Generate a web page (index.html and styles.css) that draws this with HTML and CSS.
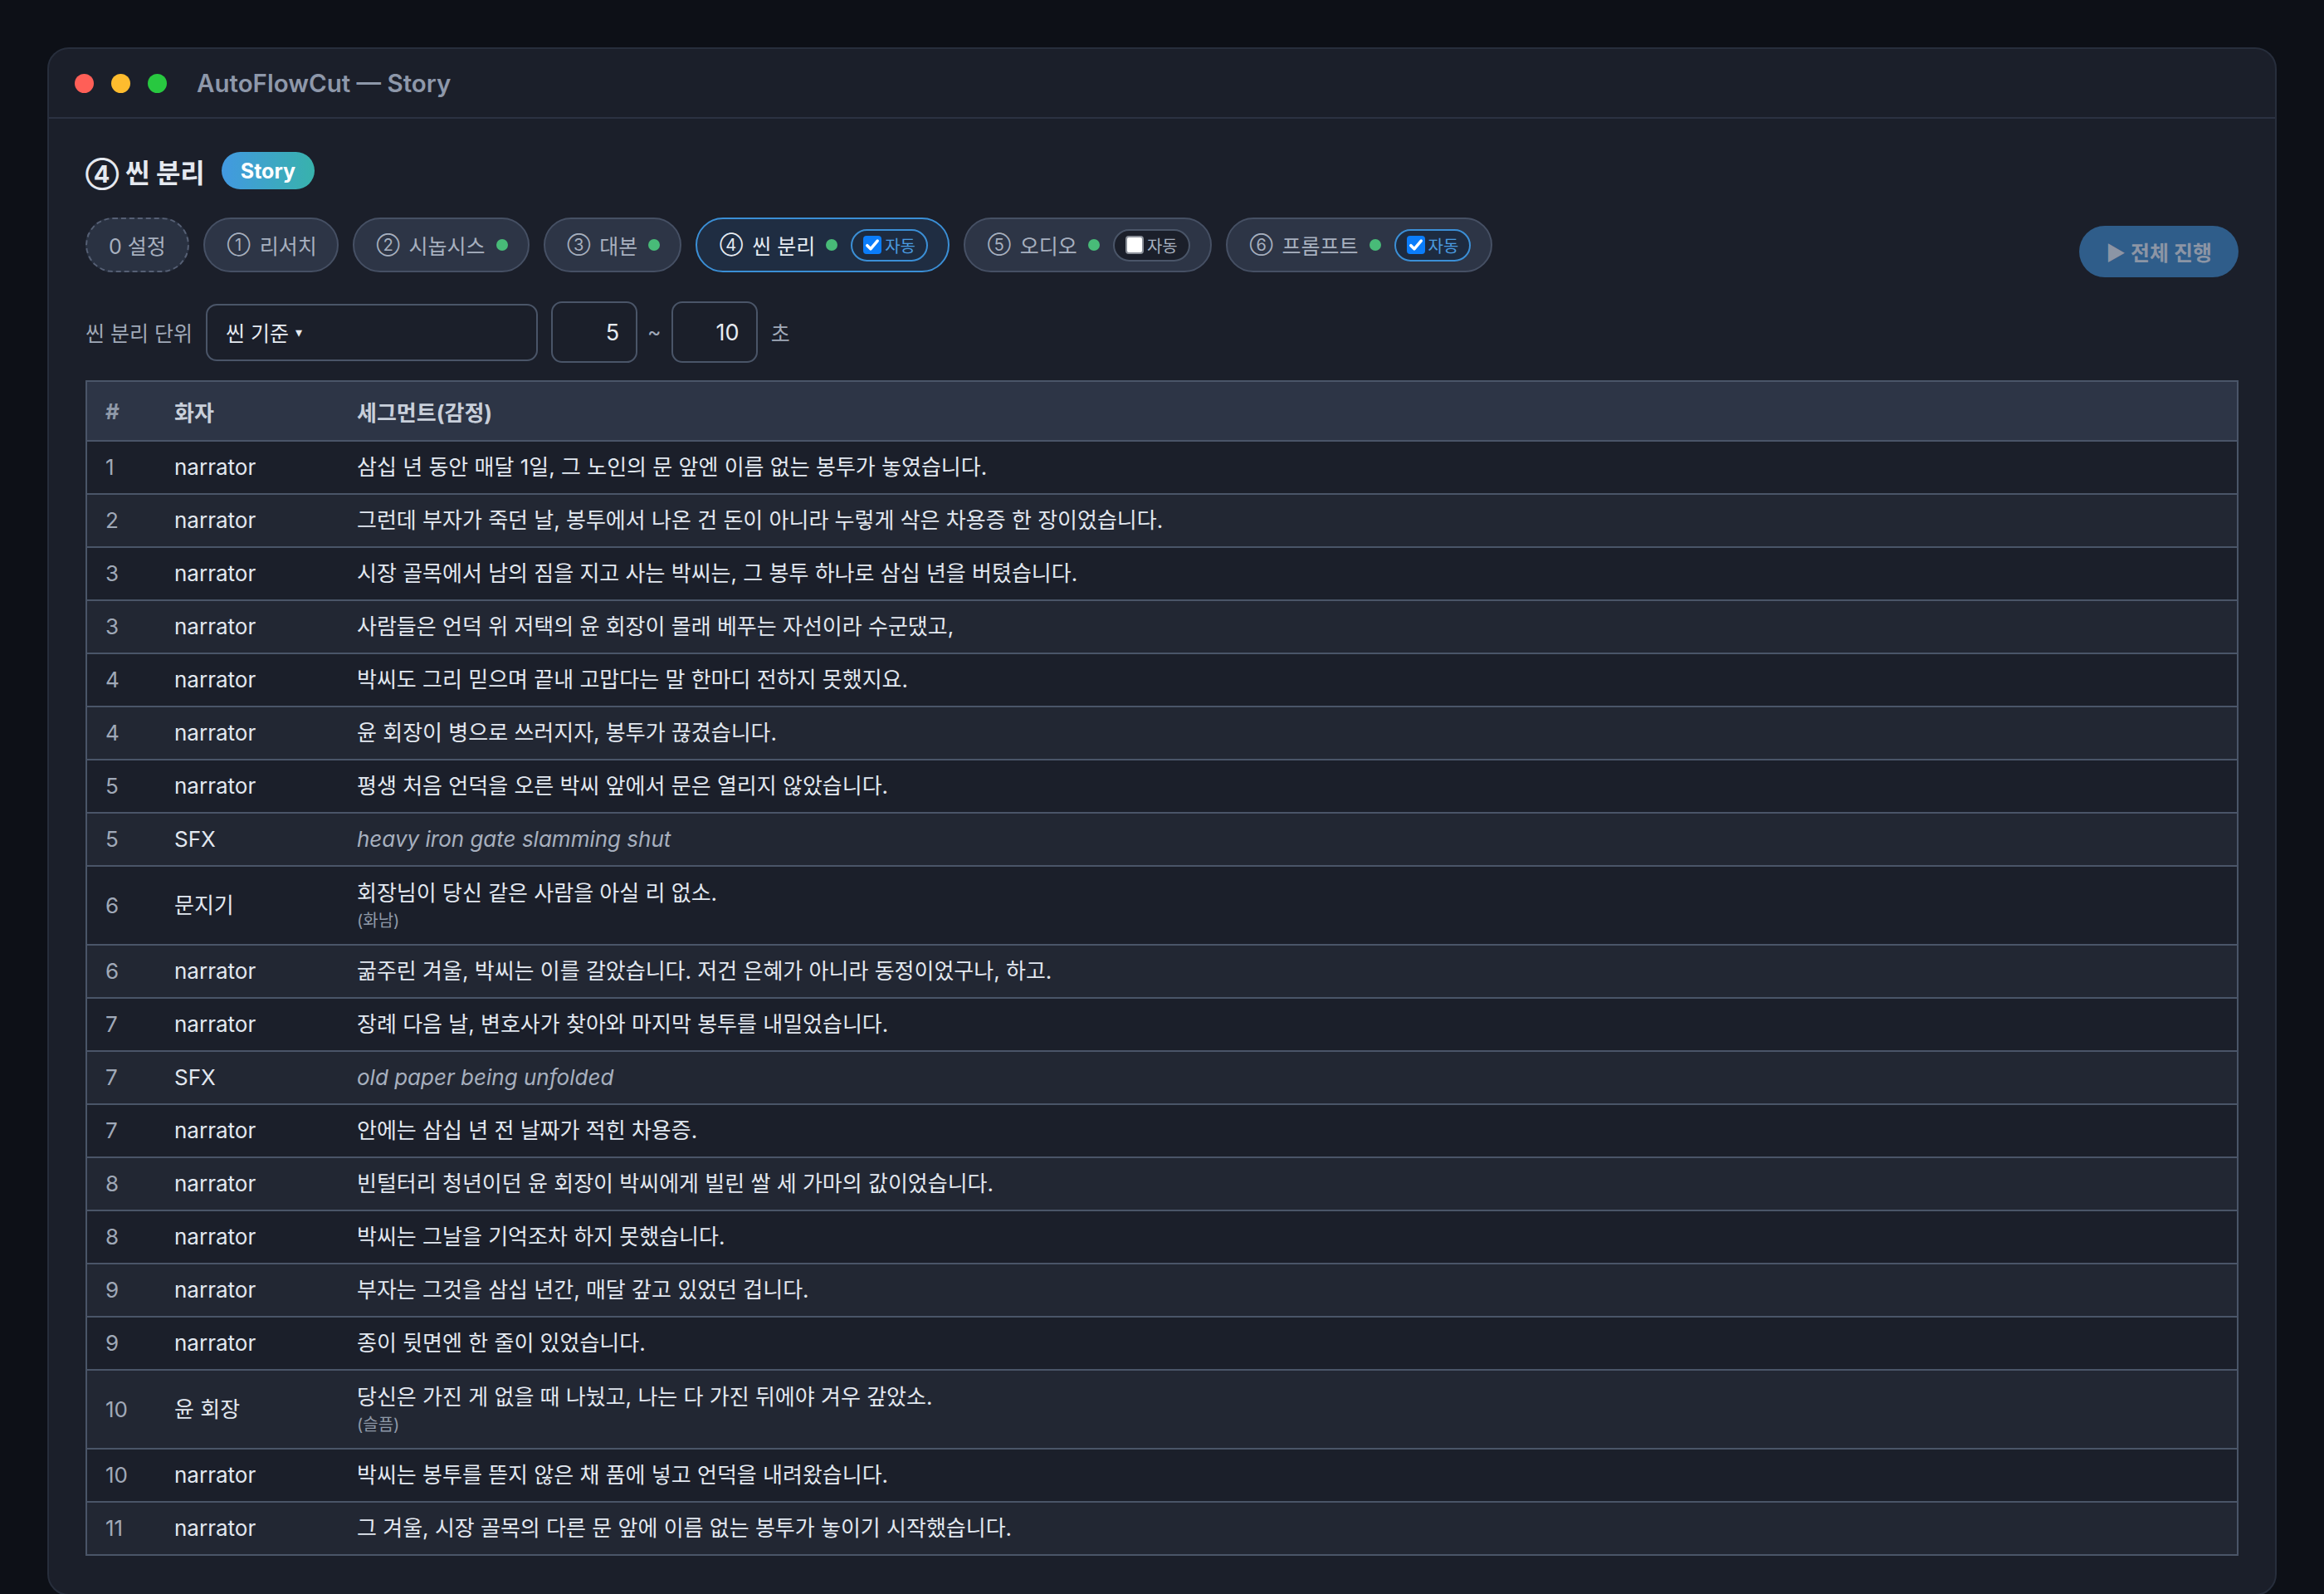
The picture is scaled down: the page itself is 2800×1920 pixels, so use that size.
FILE: index.html
```html
<!DOCTYPE html>
<html lang="ko">
<head>
  <meta charset="UTF-8" />
  <meta name="viewport" content="width=device-width, initial-scale=1.0"/>
  <title>AutoFlowCut — Story</title>
  <link rel="stylesheet" href="styles.css">
</head>
<body>

  <div class="window">
    <!-- Title bar -->
    <div class="titlebar">
      <span class="light red"></span>
      <span class="light yellow"></span>
      <span class="light green"></span>
      <span class="title">AutoFlowCut — Story</span>
    </div>

    <div class="content">
      <!-- Heading -->
      <div class="heading">
        <h2><span class="ic">④</span> 씬 분리</h2>
        <span class="badge">Story</span>
      </div>

      <!-- Step tabs -->
      <div class="toolbar">
        <div class="steps">
          <span class="step dashed">0 설정</span>
          <span class="step"><b class="ic">①</b> 리서치</span>
          <span class="step"><b class="ic">②</b> 시놉시스<i class="dot"></i></span>
          <span class="step"><b class="ic">③</b> 대본<i class="dot"></i></span>
          <span class="step active"><b class="ic">④</b> 씬 분리<i class="dot"></i>
            <span class="auto on"><span class="check on"><svg viewBox="0 0 16 16"><path d="M3.5 8.5l3 3 6-7" /></svg></span>자동</span>
          </span>
          <span class="step"><b class="ic">⑤</b> 오디오<i class="dot"></i>
            <span class="auto"><span class="check"></span>자동</span>
          </span>
          <span class="step"><b class="ic">⑥</b> 프롬프트<i class="dot"></i>
            <span class="auto on"><span class="check on"><svg viewBox="0 0 16 16"><path d="M3.5 8.5l3 3 6-7" /></svg></span>자동</span>
          </span>
        </div>
        <button class="run">▶ 전체 진행</button>
      </div>

      <!-- Split settings -->
      <div class="settings">
        <label>씬 분리 단위</label>
        <div class="select">씬 기준 <span class="caret">▾</span></div>
        <div class="num">5</div>
        <span class="tilde">~</span>
        <div class="num">10</div>
        <span class="unit">초</span>
      </div>

      <!-- Segments -->
      <table class="segments">
        <thead>
          <tr><th class="no">#</th><th class="who">화자</th><th>세그먼트(감정)</th></tr>
        </thead>
        <tbody>
          <tr><td class="no">1</td><td>narrator</td><td>삼십 년 동안 매달 1일, 그 노인의 문 앞엔 이름 없는 봉투가 놓였습니다.</td></tr>
          <tr><td class="no">2</td><td>narrator</td><td>그런데 부자가 죽던 날, 봉투에서 나온 건 돈이 아니라 누렇게 삭은 차용증 한 장이었습니다.</td></tr>
          <tr><td class="no">3</td><td>narrator</td><td>시장 골목에서 남의 짐을 지고 사는 박씨는, 그 봉투 하나로 삼십 년을 버텼습니다.</td></tr>
          <tr><td class="no">3</td><td>narrator</td><td>사람들은 언덕 위 저택의 윤 회장이 몰래 베푸는 자선이라 수군댔고,</td></tr>
          <tr><td class="no">4</td><td>narrator</td><td>박씨도 그리 믿으며 끝내 고맙다는 말 한마디 전하지 못했지요.</td></tr>
          <tr><td class="no">4</td><td>narrator</td><td>윤 회장이 병으로 쓰러지자, 봉투가 끊겼습니다.</td></tr>
          <tr><td class="no">5</td><td>narrator</td><td>평생 처음 언덕을 오른 박씨 앞에서 문은 열리지 않았습니다.</td></tr>
          <tr><td class="no">5</td><td>SFX</td><td class="sfx">heavy iron gate slamming shut</td></tr>
          <tr class="tall"><td class="no">6</td><td>문지기</td><td>회장님이 당신 같은 사람을 아실 리 없소.<div class="emotion">(화남)</div></td></tr>
          <tr><td class="no">6</td><td>narrator</td><td>굶주린 겨울, 박씨는 이를 갈았습니다. 저건 은혜가 아니라 동정이었구나, 하고.</td></tr>
          <tr><td class="no">7</td><td>narrator</td><td>장례 다음 날, 변호사가 찾아와 마지막 봉투를 내밀었습니다.</td></tr>
          <tr><td class="no">7</td><td>SFX</td><td class="sfx">old paper being unfolded</td></tr>
          <tr><td class="no">7</td><td>narrator</td><td>안에는 삼십 년 전 날짜가 적힌 차용증.</td></tr>
          <tr><td class="no">8</td><td>narrator</td><td>빈털터리 청년이던 윤 회장이 박씨에게 빌린 쌀 세 가마의 값이었습니다.</td></tr>
          <tr><td class="no">8</td><td>narrator</td><td>박씨는 그날을 기억조차 하지 못했습니다.</td></tr>
          <tr><td class="no">9</td><td>narrator</td><td>부자는 그것을 삼십 년간, 매달 갚고 있었던 겁니다.</td></tr>
          <tr><td class="no">9</td><td>narrator</td><td>종이 뒷면엔 한 줄이 있었습니다.</td></tr>
          <tr class="tall"><td class="no">10</td><td>윤 회장</td><td>당신은 가진 게 없을 때 나눴고, 나는 다 가진 뒤에야 겨우 갚았소.<div class="emotion">(슬픔)</div></td></tr>
          <tr><td class="no">10</td><td>narrator</td><td>박씨는 봉투를 뜯지 않은 채 품에 넣고 언덕을 내려왔습니다.</td></tr>
          <tr><td class="no">11</td><td>narrator</td><td>그 겨울, 시장 골목의 다른 문 앞에 이름 없는 봉투가 놓이기 시작했습니다.</td></tr>
        </tbody>
      </table>
    </div>
  </div>

</body>
</html>
```

FILE: styles.css
```css
/* Reset and base styling */
* {
  margin: 0;
  padding: 0;
  box-sizing: border-box;
}

body {
  background: #0d1017;
  color: #e2e8f0;
  font-family: 'Inter', 'Noto Sans CJK KR', sans-serif;
  font-size: 26px;
  padding: 57px 57px 0;
}

/* Window frame */
.window {
  background: #1b1f2a;
  border: 2px solid #272e3c;
  border-radius: 26px;
  overflow: hidden;
}

.titlebar {
  height: 84px;
  display: flex;
  align-items: center;
  padding-left: 31px;
  gap: 21px;
  border-bottom: 2px solid #2b3242;
}

.light {
  width: 23px;
  height: 23px;
  border-radius: 50%;
}

.light.red { background: #ff5f57; }
.light.yellow { background: #febc2e; }
.light.green { background: #28c840; }

.title {
  margin-left: 15px;
  font-size: 29.5px;
  font-weight: 600;
  color: #8e98aa;
}

.content {
  padding: 40px 44px 46px;
}

/* Heading */
.heading {
  display: flex;
  align-items: center;
  gap: 20px;
  height: 45px;
}

.heading h2 {
  font-size: 32px;
  font-weight: 700;
  color: #e5e9f0;
}

.heading h2 .ic {
  font-size: 29px;
}

.badge {
  height: 45px;
  padding: 0 23px;
  border-radius: 23px;
  display: flex;
  align-items: center;
  font-size: 25px;
  font-weight: 700;
  color: #fff;
  background: linear-gradient(90deg, #4299e1, #38b2ac);
}

/* Steps */
.toolbar {
  display: flex;
  justify-content: space-between;
  align-items: flex-start;
  margin-top: 34px;
}

.steps {
  display: flex;
  gap: 17px;
}

.step {
  height: 66px;
  padding: 0 24px 0 27px;
  border-radius: 33px;
  display: flex;
  align-items: center;
  white-space: pre;
  font-size: 25px;
  color: #a7b0bf;
  background: #2d3546;
  border: 2px solid #465064;
}

.step .ic {
  margin-right: 4px;
  font-weight: 400;
  font-size: 20px;
}

.step.dashed {
  padding: 0 26px;
  border-style: dashed;
  border-color: #566075;
  background: #2a3242;
}

.step.active {
  background: #1f2d42;
  border-color: #3b8fd6;
  color: #e6ebf2;
}

.dot {
  margin-left: 13px;
  width: 14px;
  height: 14px;
  border-radius: 50%;
  background: #48bb78;
}

.auto {
  margin-left: 16px;
  height: 39px;
  padding: 0 13px;
  border-radius: 20px;
  display: flex;
  align-items: center;
  gap: 4px;
  font-size: 20px;
  color: #a7b0bf;
  background: #1b1f2a;
  border: 2px solid #4a5568;
}

.auto.on {
  color: #4a9be0;
  background: #1d2b40;
  border-color: #3b8fd6;
}

.check {
  width: 22px;
  height: 22px;
  border-radius: 4px;
  background: #fff;
  border: 2px solid #8a8f98;
}

.check.on {
  background: #0b7dfa;
  border: none;
}

.check svg {
  width: 22px;
  height: 22px;
  display: block;
  fill: none;
  stroke: #fff;
  stroke-width: 2.6;
  stroke-linecap: round;
  stroke-linejoin: round;
}

.run {
  margin-top: 10px;
  height: 62px;
  padding: 0 32px;
  border: none;
  border-radius: 31px;
  background: #2f5d8a;
  color: #8c95a5;
  font-family: inherit;
  font-size: 25px;
  font-weight: 700;
}

/* Settings row */
.settings {
  display: flex;
  align-items: center;
  gap: 16px;
  margin-top: 29px;
  color: #a0a9b8;
  font-size: 25px;
}

.select {
  width: 400px;
  height: 69px;
  padding: 0 22px;
  display: flex;
  align-items: center;
  gap: 8px;
  border: 2px solid #4a5568;
  border-radius: 13px;
  color: #e6ebf2;
}

.caret {
  font-size: 16px;
}

.num {
  width: 104px;
  height: 74px;
  padding: 0 20px;
  display: flex;
  align-items: center;
  justify-content: flex-end;
  border: 2px solid #4a5568;
  border-radius: 13px;
  color: #e6ebf2;
  font-size: 27px;
}

.tilde {
  margin: 0 -4px;
}

/* Segment table */
.segments {
  width: 100%;
  margin-top: 21px;
  border-collapse: collapse;
  border: 2px solid #4a5568;
}

.segments th,
.segments td {
  text-align: left;
  padding: 0 22px;
  border-bottom: 2px solid #4a5568;
  vertical-align: middle;
}

.segments th {
  height: 72px;
  background: #2d3546;
  font-weight: 700;
  color: #c8cfda;
}

.segments th.no { color: #8f99a8; width: 84px; }
.segments th.who { width: 220px; }

.segments td {
  height: 64px;
  line-height: 1.3;
}

.segments tbody tr:nth-child(odd) { background: #1b1f2a; }
.segments tbody tr:nth-child(even) { background: #222733; }

.segments tr.tall td { height: 95px; }

.segments td.no { color: #a0a9b8; }

.segments td.sfx {
  font-style: italic;
  color: #a7b0bf;
}

.emotion {
  margin-top: 3px;
  font-size: 20px;
  color: #8f99a8;
}
```
